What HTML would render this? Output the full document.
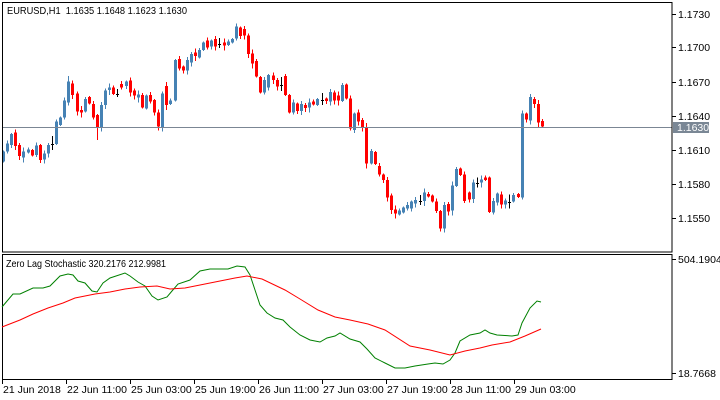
<!DOCTYPE html><html><head><meta charset="utf-8"><style>
html,body{margin:0;padding:0;background:#fff;width:720px;height:400px;overflow:hidden}
svg{display:block;font-family:"Liberation Sans","DejaVu Sans",sans-serif;font-size:10.5px}
</style></head><body>
<svg id="s" width="720" height="400" xmlns="http://www.w3.org/2000/svg" shape-rendering="crispEdges">
<rect x="0" y="0" width="720" height="400" fill="#fff"/>
<g id="c"></g>
<line x1="2" y1="127.5" x2="672" y2="127.5" stroke="#7b8694"/>
<rect x="2.5" y="2.5" width="669.5" height="249.5" fill="none" stroke="#000"/>
<rect x="2.5" y="254.5" width="669.5" height="125" fill="none" stroke="#000"/>
<text x="7" y="14" fill="#000" xml:space="preserve" textLength="180" lengthAdjust="spacingAndGlyphs">EURUSD,H1  1.1635 1.1648 1.1623 1.1630</text>
<text x="6" y="267" fill="#000" textLength="160" lengthAdjust="spacingAndGlyphs">Zero Lag Stochastic 320.2176 212.9981</text>
<g fill="#000" id="ax"></g>
<rect x="673" y="122" width="36" height="11" fill="#7a8795"/>
<text x="677" y="131" fill="#fff">1.1630</text>
<polyline shape-rendering="auto" fill="none" stroke="#008000" stroke-width="1" points="2,307 13,294 20,294 33,288 43,288 50,286 60,276 68,274 73,275 78,281 85,283 92,291 97,292 103,283 110,278 125,273 130,276 138,282 145,286 152,296 158,300 167,297 172,291 178,284 190,280 200,271 210,269 228,269 237,266 245,267 250,275 255,290 260,305 267,313 275,318 283,320 290,327 300,335 310,340 320,342 327,338 335,336 340,333 350,339 360,342 367,349 375,358 385,363 395,368 405,368 415,366 428,364 435,363 443,364 450,360 455,353 460,341 470,335 480,333 485,330 490,333 497,335 512,336 518,335 522,323 530,308 537,301 541,302"/>
<polyline shape-rendering="auto" fill="none" stroke="#ff0000" stroke-width="1" points="2,327 20,320 33,314 48,308 63,303 75,298 95,294 110,292 125,289 140,287 157,286 170,289 185,288 200,285 220,281 235,278 247,276 262,279 285,290 300,299 318,310 335,317 350,320 368,324 385,330 410,346 430,350 450,355 465,351 480,348 492,345 510,342 525,336 541,329"/>
</svg>
<script>
var d="b455 485,b430 455,b402 435,r398 438,r435 468,b455 473,b448 458,r450 467,b437 465,r435 480,b460 478,b435 460,k432 432,b365 432,b352 375,b302 352,b245 308,r250 285,r280 335,r330 338,b297 335,r291 310,r312 352,r345 382,b315 382,b272 315,b263 270,r262 282,k282 282,r252 262,b245 258,r241 278,r272 287,b283 292,r285 322,b287 325,r285 305,r300 338,r338 380,b280 382,r258 315,b302 312,b180 302,r177 205,r200 212,b180 212,b162 187,r158 168,b150 173,b127 150,r122 142,b122 140,r117 140,k132 132,r128 137,b125 135,b117 127,b80 115,r83 108,r87 106,r107 162,r160 190,r183 230,r231 278,b240 278,b225 262,r227 240,r240 260,k255 255,r228 285,r285 338,b307 338,r310 333,b312 333,r315 324,b307 322,r305 313,b297 315,k300 300,r296 303,b276 305,r277 301,r287 302,b255 303,r254 295,r295 385,b340 390,r338 365,r360 383,r381 490,b453 490,r456 492,r498 523,r523 540,r540 593,r587 630,r628 640,b632 644,b622 638,b615 625,b605 625,b600 611,k603 603,b578 603,r582 590,r587 605,r605 633,r633 686,b615 685,r612 635,b557 632,b507 558,r505 525,r524 603,r578 598,b547 597,k550 550,b538 548,r533 540,r533 636,b603 638,b580 608,r583 613,b601 613,k607 607,b585 605,r582 591,b340 592,r340 358,b291 362,r297 312,r312 368,r363 380".split(",");
var wk={16:[228,0],23:[0,420],13:[0,0],85:[0,0],29:[0,0],89:[0,0],107:[0,0]};
var h="",n=d.length;
for(var i=0;i<n;i++){var t=d[i][0],p=d[i].slice(1).split(" "),a=+p[0]/3,b=+p[1]/3;
var cx=Math.round(3+i*539/(n-1)),col=t=="b"?"#4682b4":t=="r"?"#ff0000":"#000";
var s=(i*37)%7,hi=a-1-(s%4),lo=b+1+((s*3)%5);
if(t=="k"){hi=a-5-(s%4);lo=a+3+(s%5);}
if(wk[i]){if(wk[i][0])hi=wk[i][0]/3;if(wk[i][1])lo=wk[i][1]/3;}
h+='<rect x="'+cx+'" y="'+hi.toFixed(1)+'" width="1" height="'+(lo-hi).toFixed(1)+'" fill="'+col+'"/>';
if(t=="k")h+='<rect x="'+(cx-1)+'" y="'+Math.round(a)+'" width="3" height="1" fill="#000"/>';
else h+='<rect x="'+(cx-1)+'" y="'+a.toFixed(1)+'" width="3" height="'+Math.max(1,b-a).toFixed(1)+'" fill="'+col+'"/>';}
document.getElementById("c").innerHTML=h;
var ax="",pl=[["1.1730",14],["1.1700",47],["1.1670",82],["1.1640",116],["1.1610",150],["1.1580",184],["1.1550",218],["504.1904",259],["18.7668",373]];
pl.forEach(function(q){ax+='<rect x="672" y="'+q[1]+'" width="4" height="1"/><text x="678" y="'+(q[1]+4)+'">'+q[0]+'</text>';});
var tl=["21 Jun 2018","22 Jun 11:00","25 Jun 03:00","25 Jun 19:00","26 Jun 11:00","27 Jun 03:00","27 Jun 19:00","28 Jun 11:00","29 Jun 03:00"];
tl.forEach(function(q,k){var x=2+64*k;ax+='<rect x="'+x+'" y="380" width="1" height="4"/><text x="'+(x+1)+'" y="393">'+q+'</text>';});
document.getElementById("ax").innerHTML=ax;
</script>
</body></html>
